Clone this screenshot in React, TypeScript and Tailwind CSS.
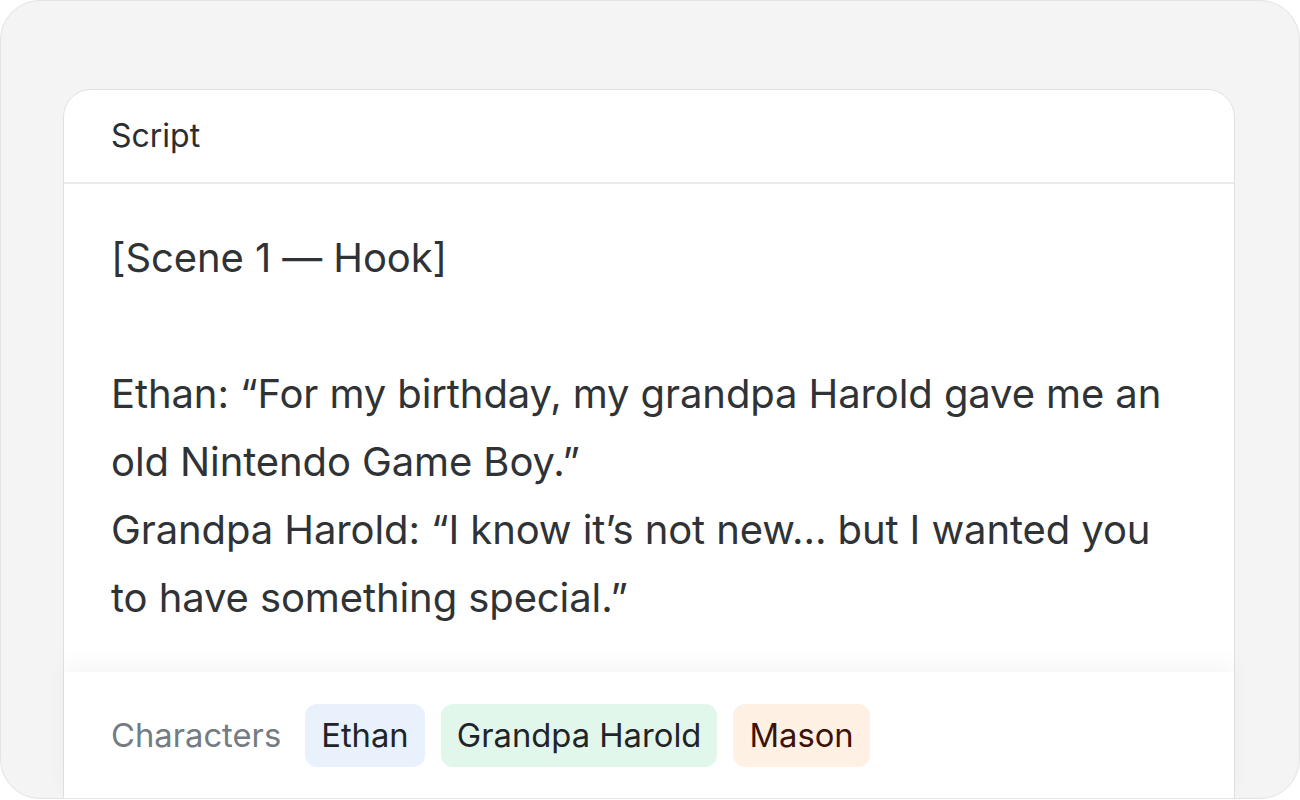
export default function App() {
  const body = `[Scene 1 — Hook]

Ethan: “For my birthday, my grandpa Harold gave me an old Nintendo Game Boy.”
Grandpa Harold: “I know it’s not new… but I wanted you to have something special.”`;
  return (
    <div className="w-[1300px] h-[800px] bg-white" style={{ fontFamily: "Inter, 'Noto Sans', sans-serif" }}>
      <div className="w-[1300px] h-[799px] rounded-[40px] border border-[#e3e3e3] bg-[#f4f4f4] overflow-hidden pt-[88px] pl-[62px] pr-[64px]">
        <div className="bg-white border border-[#e0e0e0] rounded-t-[28px] flex flex-col h-[760px]">
          <div className="h-[94px] flex items-center pl-[47px] border-b-2 border-[#ebebeb]">
            <span className="text-[32px] text-[#2a2e32]">Script</span>
          </div>
          <div className="pl-[47px] pr-[48px] pt-[40px] pb-[40px] text-[40px] leading-[68px] text-[#2f3336] whitespace-pre-wrap tracking-[-0.1px]">
            {body}
          </div>
          <div className="flex items-center gap-6 pl-[47px] pt-[32px] pb-[32px] bg-white shadow-[0_-10px_20px_rgba(0,0,0,0.035)] relative">
            <span className="text-[32.75px] text-[#737c82]">Characters</span>
            <div className="flex gap-4">
              <span className="h-[63px] px-4 flex items-center rounded-[12px] bg-[#e8f1fc] text-[32.75px] text-[#1f2428]">Ethan</span>
              <span className="h-[63px] px-4 flex items-center rounded-[12px] bg-[#e2f7eb] text-[32.75px] text-[#1f2428]">Grandpa Harold</span>
              <span className="h-[63px] px-4 flex items-center rounded-[12px] bg-[#fef1e3] text-[32.75px] text-[#3b1307]">Mason</span>
            </div>
          </div>
        </div>
      </div>
    </div>
  );
}
